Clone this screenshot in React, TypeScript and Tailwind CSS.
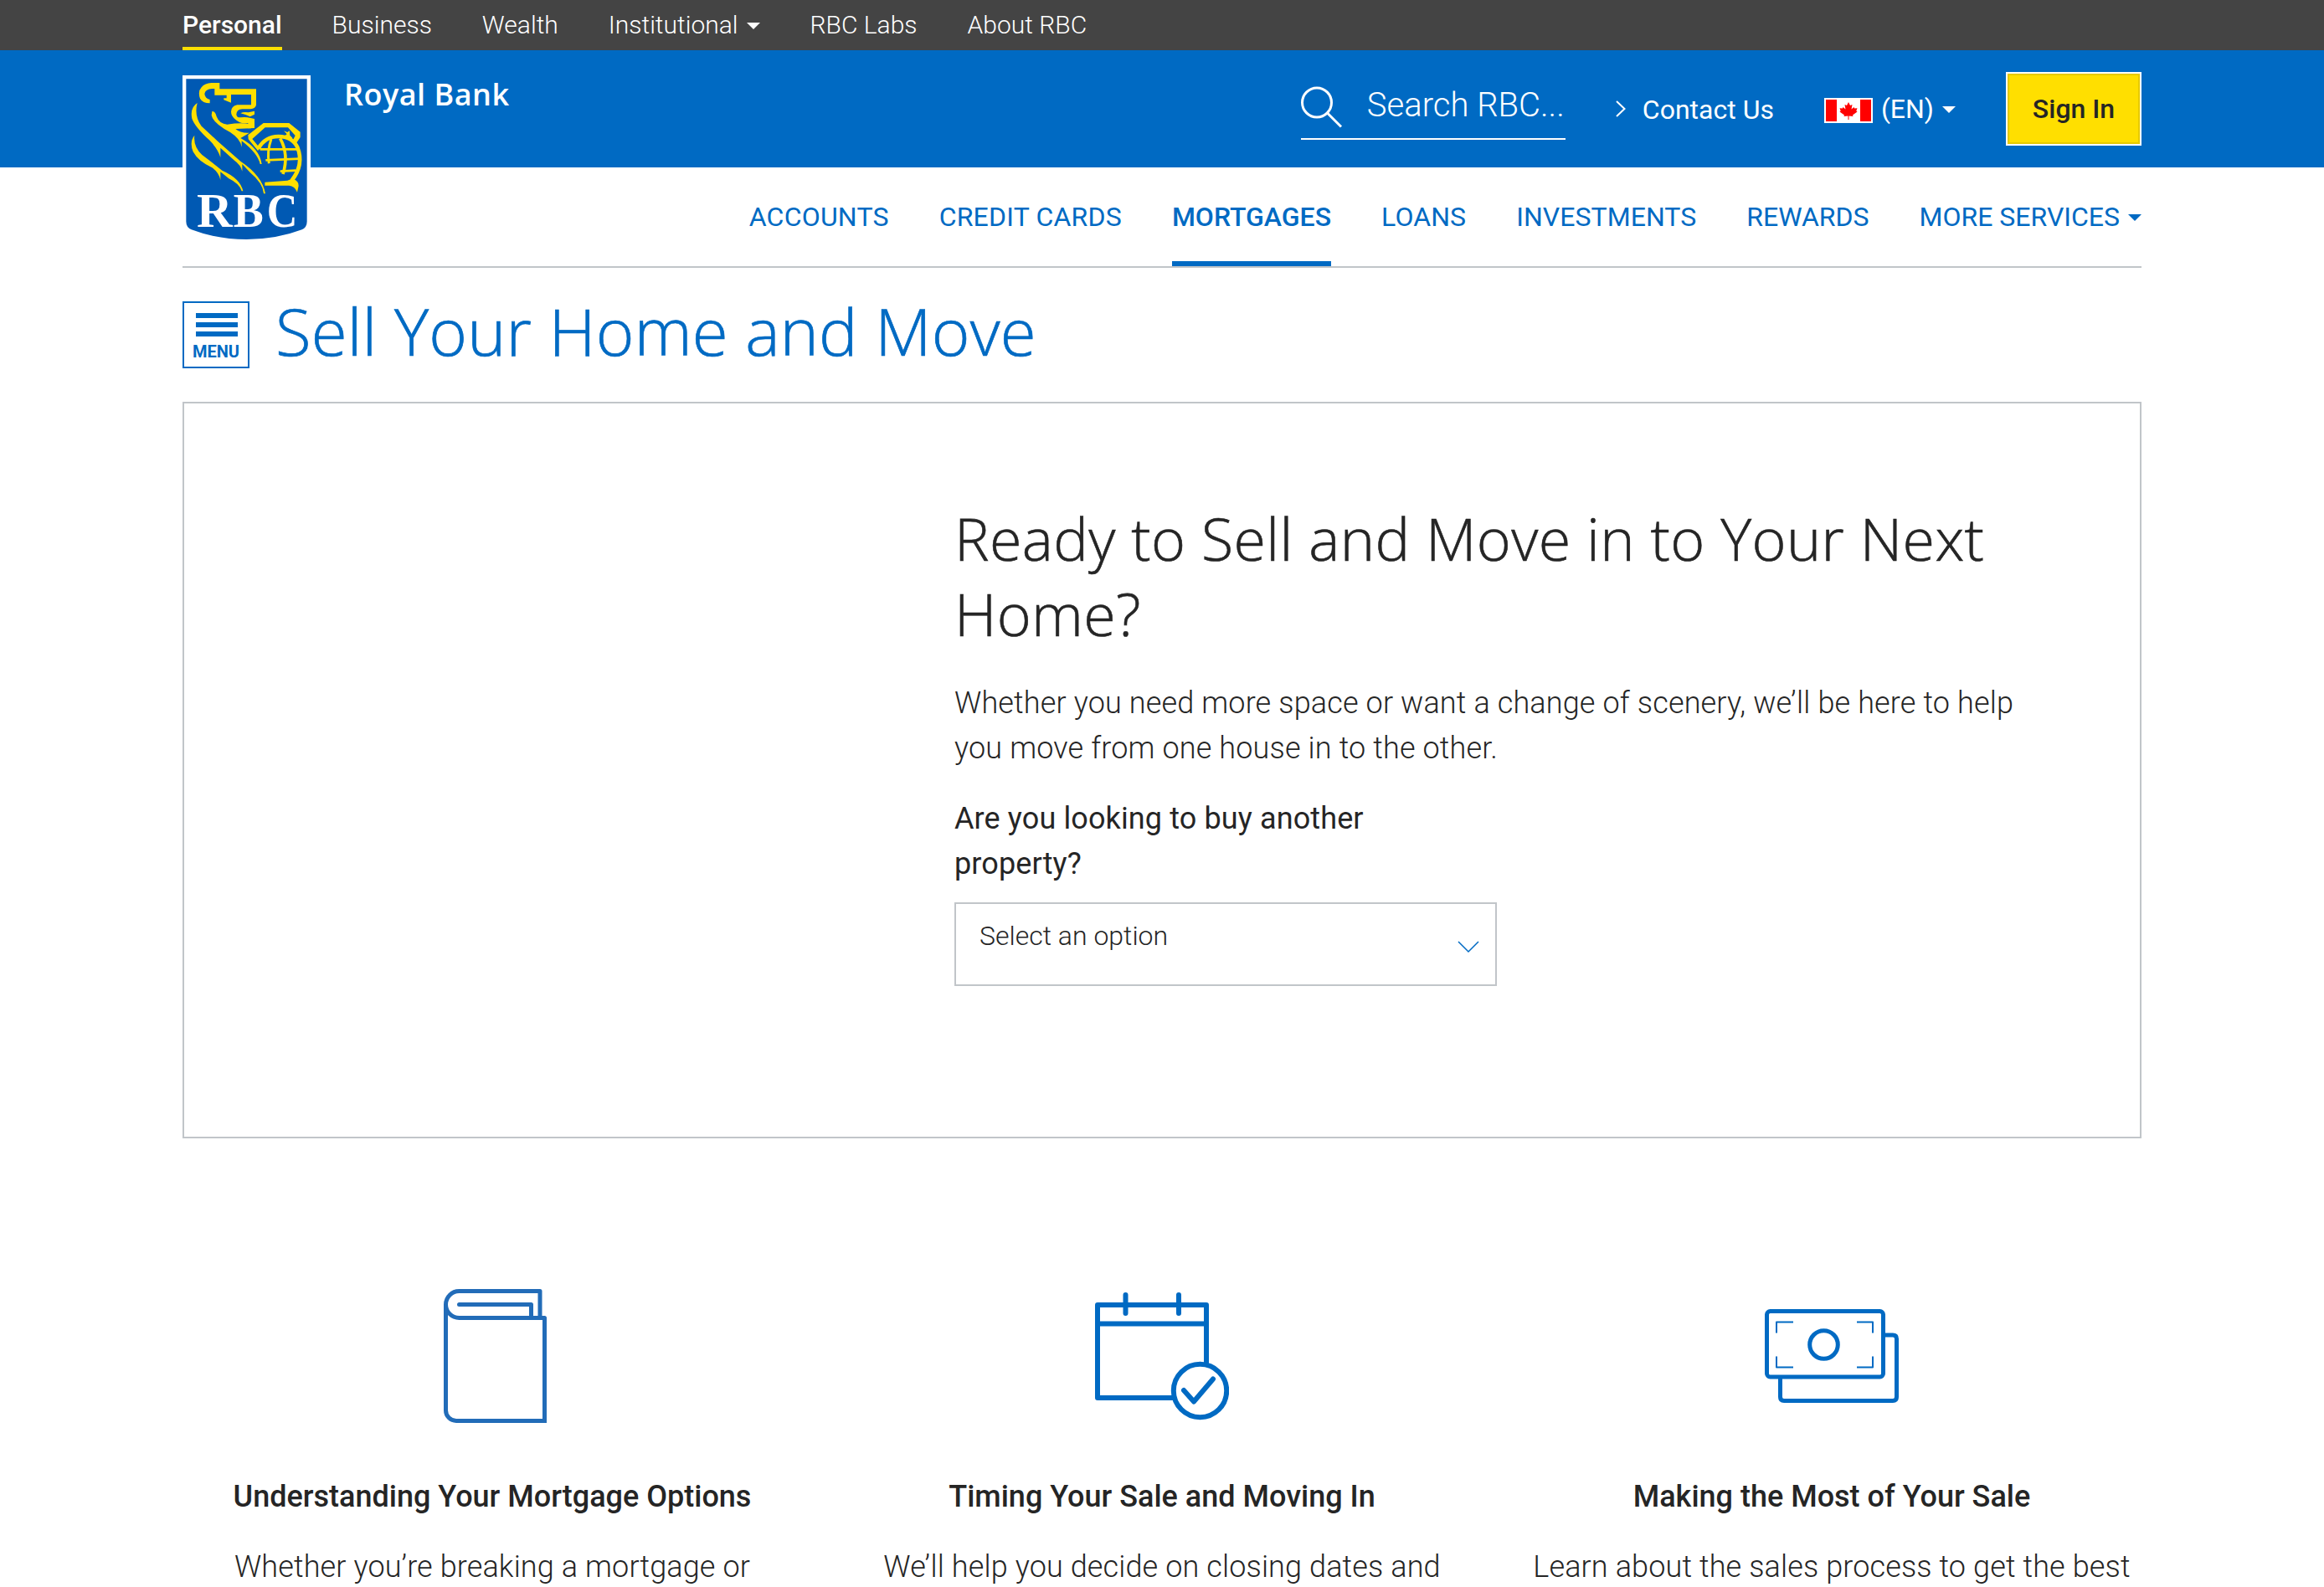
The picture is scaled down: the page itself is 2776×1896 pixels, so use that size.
import React from "react";

const TOP_LINKS = [
  { label: "Personal", active: true },
  { label: "Business" },
  { label: "Wealth" },
  { label: "Institutional", caret: true },
  { label: "RBC Labs" },
  { label: "About RBC" },
];

const MAIN_LINKS = [
  { label: "ACCOUNTS", tracking: "tracking-[0.2px]" },
  { label: "CREDIT CARDS", tracking: "tracking-[0.2px]" },
  { label: "MORTGAGES", active: true },
  { label: "LOANS", tracking: "tracking-[0.1px]" },
  { label: "INVESTMENTS", tracking: "tracking-[0.05px]" },
  { label: "REWARDS" },
  { label: "MORE SERVICES", caret: true },
];

function Caret() {
  return (
    <svg width="16" height="8" viewBox="0 0 16 8" fill="currentColor" className="mt-[2px]">
      <path d="M0 0H16L8 8Z" />
    </svg>
  );
}

function Logo() {
  return (
    <svg width="153" height="198" viewBox="54 60 459 594" className="block">
      <path d="M54 60H513V390H54Z" fill="#fff" />
      <path
        d="M67 73H500V584Q500 604 482 613Q390 648 284 648Q178 648 86 613Q67 604 67 584Z"
        fill="#0059b3"
      />
      <g fill="#ffdf00">
        <path d="M187 87V109H318V166Q316 180 298 181H268Q248 182 247 200Q248 212 262 211Q280 208 298 213L312 216V249L289 250V231H282Q262 235 240 215Q228 204 228 190Q229 170 250 166H300V129H228V158L202 148V142H212V131H169V108H160Q136 110 133 126Q134 142 152 147V160Q126 160 117 143Q108 118 122 103Q134 88 158 87Z" />
        <path d="M262 196Q272 190 290 193L312 188V200L296 208L280 201Z" />
        <path d="M107 159Q95 205 122 242L180 296L262 368Q340 420 351 484H345Q342 446 296 408L268 378V404Q262 380 240 365L190 320V354Q180 322 150 292Q98 244 88 215Q80 176 107 159Z" />
        <path d="M97 275Q92 315 124 345Q160 372 196 401Q262 430 271 475H266Q258 448 220 430L190 406V435Q184 408 160 391Q110 368 92 334Q78 298 97 275Z" />
        <path d="M160 189Q172 188 176 208Q186 234 214 236Q270 228 300 236V250L244 252Q262 268 294 266L262 285Q330 322 338 378H332Q324 340 266 295V317Q262 288 225 264Q164 232 158 203Z" />
        <path d="M289 274L344 231H436L476 263V282L460 306L446 299L458 276L432 247H350L304 288L332 322L324 330L290 289Z" />
        <path d="M417 259L430 264L437 258L439 275L448 284L436 290L420 277L428 271Z" />
        <path d="M349 443L430 437L448 430Q472 440 470 456L465 479Q456 456 436 455H349Z" />
      </g>
      <g fill="none" stroke="#ffdf00">
        <path d="M326 322Q350 279 398 279Q448 280 466 318Q490 380 446 436" strokeWidth="14" />
        <path d="M372 288Q356 334 364 376" strokeWidth="9" />
        <path d="M404 286Q436 344 414 414" strokeWidth="11" />
        <path d="M332 325H468M352 364L474 359M404 404L460 401" strokeWidth="8" />
      </g>
      <g fill="#fff" fontFamily="Liberation Serif, serif" fontWeight="700" fontSize="168">
        <text x="105" y="602" textLength="128" lengthAdjust="spacingAndGlyphs">R</text>
        <text x="236" y="602" textLength="108" lengthAdjust="spacingAndGlyphs">B</text>
        <text x="356" y="602" textLength="110" lengthAdjust="spacingAndGlyphs">C</text>
      </g>
    </svg>
  );
}

function Flag() {
  return (
    <svg width="58" height="30" viewBox="0 0 58 30" className="mt-1">
      <path d="M0 0H58V30H0Z" fill="#fff" />
      <path d="M2 2H15V28H2ZM43 2H56V28H43Z" fill="#f00" />
      <path
        d="M29 5L31 9L33.500 8L32.500 13.500L35.500 11L36.200 12.500L39.500 12.200L38.300 15.500L39.500 16.500L34 20.500L34.500 22L29.500 21.500V26H28.500V21.500L23.500 22L24 20.500L18.500 16.500L19.700 15.500L18.500 12.200L21.800 12.500L22.500 11L25.500 13.500L24.500 8L27 9Z"
        fill="#f00"
      />
    </svg>
  );
}

function BookIcon() {
  return (
    <svg width="160" height="160" viewBox="0 0 160 160" fill="none" stroke="#226cb8" strokeWidth="5" strokeLinejoin="round">
      <path d="M137 34V2.500H40.500A16 16 0 0 0 40.500 34.500H142.500V157.500H37A12.500 12.500 0 0 1 24.500 145V18.500" />
      <path d="M40.500 18.500H126.500V34" strokeLinecap="round" />
      <path d="M140 155H145V160H140Z" fill="#226cb8" stroke="none" />
    </svg>
  );
}

function CalendarIcon() {
  return (
    <svg width="160" height="160" viewBox="0 0 160 160" fill="none" stroke="#006ac3" strokeWidth="6" strokeLinejoin="round" strokeLinecap="round">
      <path d="M133 88V19H3V130H96M3 41.500H133M36.500 7V29M100 7V29" />
      <circle cx="125.500" cy="121.500" r="31.700" fill="#fff" />
      <path d="M106 121L118 134.500L141 107.500" />
    </svg>
  );
}

function MoneyIcon() {
  return (
    <svg width="160" height="160" viewBox="0 0 160 160" fill="none" stroke="#006ac3" strokeWidth="5">
      <rect x="2.500" y="26.500" width="139" height="78.500" rx="4" />
      <path d="M141 55H153Q157.500 55 157.500 59.500V129Q157.500 133.500 153 133.500H23Q18.500 133.500 18.500 129V105" />
      <circle cx="70.500" cy="66.500" r="16.800" />
      <path
        d="M34 39.500H14V52.500M110 39.500H129V52.500M34 93.500H14V80.500M110 93.500H129V80.500"
        strokeWidth="2"
        strokeLinejoin="round"
      />
    </svg>
  );
}

const FEATURES = [
  { Icon: BookIcon, title: "Understanding Your Mortgage Options", text: "Whether you’re breaking a mortgage or" },
  { Icon: CalendarIcon, title: "Timing Your Sale and Moving In", text: "We’ll help you decide on closing dates and" },
  { Icon: MoneyIcon, title: "Making the Most of Your Sale", text: "Learn about the sales process to get the best" },
];

export default function App() {
  return (
    <div className="h-[1896px] w-[2776px] overflow-hidden bg-white font-['Roboto',sans-serif] text-[#252525]">
      <div className="h-[60px] bg-[#444]">
        <nav className="mx-auto flex h-full w-[2340px] gap-[60px] text-[30px] leading-[60px] font-light text-white">
          {TOP_LINKS.map((l) => (
            <a
              key={l.label}
              className={
                l.active
                  ? "border-b-4 border-[#ffdf00] font-medium leading-[60px]"
                  : "flex items-center gap-[10px]"
              }
            >
              {l.label}
              {l.caret && <Caret />}
            </a>
          ))}
        </nav>
      </div>

      <header className="h-[140px] bg-[#006ac3]">
        <div className="mx-auto flex h-full w-[2340px] text-white">
          <div className="mt-[30px] h-[110px] w-[153px]">
            <Logo />
          </div>
          <div className="mt-[31px] ml-10 font-['Open_Sans',sans-serif] text-[36px] leading-[44px] font-semibold tracking-[0.5px]">
            Royal Bank
          </div>
          <div className="ml-auto flex items-center">
            <div className="mt-[25px] mr-[60px] flex h-[82px] w-[316px] gap-[29px] self-start border-b-2 border-white">
              <svg width="50" height="50" viewBox="0 0 50 50" fill="none" stroke="#fff" strokeWidth="3" className="mt-[18px] shrink-0">
                <circle cx="19" cy="19.500" r="17.500" />
                <path d="M31 31.500L48 48.500" />
              </svg>
              <span className="-mt-1 text-[40px] leading-[90px] font-light whitespace-nowrap">Search RBC...</span>
            </div>
            <a className="mr-[60px] flex items-center gap-5 text-[32px]">
              <svg width="12" height="20" viewBox="0 0 12 20" fill="none" stroke="#fff" strokeWidth="2">
                <path d="M1 1L10.500 10L1 19" />
              </svg>
              <span className="pt-[2px]">Contact Us</span>
            </a>
            <a className="mr-[60px] flex items-center text-[32px]">
              <Flag />
              <span className="mr-[10px] ml-[10px]">(EN)</span>
              <Caret />
            </a>
            <button className="h-[88px] w-[162px] border-2 border-white bg-[#ffdf00] text-[32px] font-medium text-[#252525] shadow-[inset_0_0_0_2px_#e6c900]">
              Sign In
            </button>
          </div>
        </div>
      </header>

      <div className="mx-auto w-[2340px]">
        <nav className="flex h-[120px] justify-end gap-[60px] border-b-2 border-[#c1c5c9] text-[32px] leading-[118px] text-[#006ac3]">
          {MAIN_LINKS.map((l) => (
            <a
              key={l.label}
              className={
                l.active
                  ? "h-[118px] border-b-6 border-[#006ac3] font-medium"
                  : `flex items-center gap-[10px] ${l.tracking ?? ""}`
              }
            >
              {l.label}
              {l.caret && <Caret />}
            </a>
          ))}
        </nav>

        <div className="mt-10 flex h-20 items-center">
          <button className="flex h-20 w-20 flex-col items-center border-2 border-[#006ac3] pt-3 text-[#006ac3]">
            <span className="ml-[2px] h-[6px] w-[50px] shrink-0 bg-[#006ac3]" />
            <span className="mt-[5px] ml-[2px] h-[6px] w-[50px] shrink-0 bg-[#006ac3]" />
            <span className="mt-[5px] ml-[2px] h-[6px] w-[50px] shrink-0 bg-[#006ac3]" />
            <span className="mt-[6px] text-[20px] leading-[24px] font-bold">MENU</span>
          </button>
          <h1 className="-mt-[10px] ml-[31px] font-['Open_Sans',sans-serif] text-[78px] leading-[80px] font-light tracking-[0.2px] text-[#006ac3] [-webkit-text-stroke:0.7px_#006ac3]">
            Sell Your Home and Move
          </h1>
        </div>

        <section className="mt-10 h-[880px] border-2 border-[#c1c5c9] pt-[116px] pl-[920px]">
          <h2 className="font-['Open_Sans',sans-serif] text-[70px] leading-[90px] font-light tracking-[0.36px] whitespace-nowrap [-webkit-text-stroke:0.6px_#252525]">
            Ready to Sell and Move in to Your Next
            <br />
            Home?
          </h2>
          <p className="mt-[35px] text-[36px] leading-[54px] font-light tracking-[0.14px]">
            Whether you need more space or want a change of scenery, we’ll be here to help
            <br />
            you move from one house in to the other.
          </p>
          <label className="mt-[30px] block text-[36px] leading-[54px] tracking-[0.12px]">
            Are you looking to buy another
            <br />
            property?
          </label>
          <div className="mt-[19px] flex h-[100px] w-[648px] justify-between border-2 border-[#c1c5c9] pr-[19px] pl-[28px] text-[32px] leading-[76px] font-light">
            Select an option
            <svg width="26" height="15" viewBox="0 0 26 15" fill="none" stroke="#006ac3" strokeWidth="1.500" className="mt-[44px]">
              <path d="M1 1L13 13L25 1" />
            </svg>
          </div>
        </section>

        <section className="mt-[180px] grid grid-cols-3 gap-[60px] text-center">
          {FEATURES.map(({ Icon, title, text }) => (
            <div key={title} className="flex flex-col items-center">
              <Icon />
              <h3 className="mt-[61px] text-[36px] leading-[54px] font-medium">{title}</h3>
              <p className="mt-[30px] text-[36px] leading-[54px] font-light tracking-[0.12px] whitespace-nowrap">{text}</p>
            </div>
          ))}
        </section>
      </div>
    </div>
  );
}
